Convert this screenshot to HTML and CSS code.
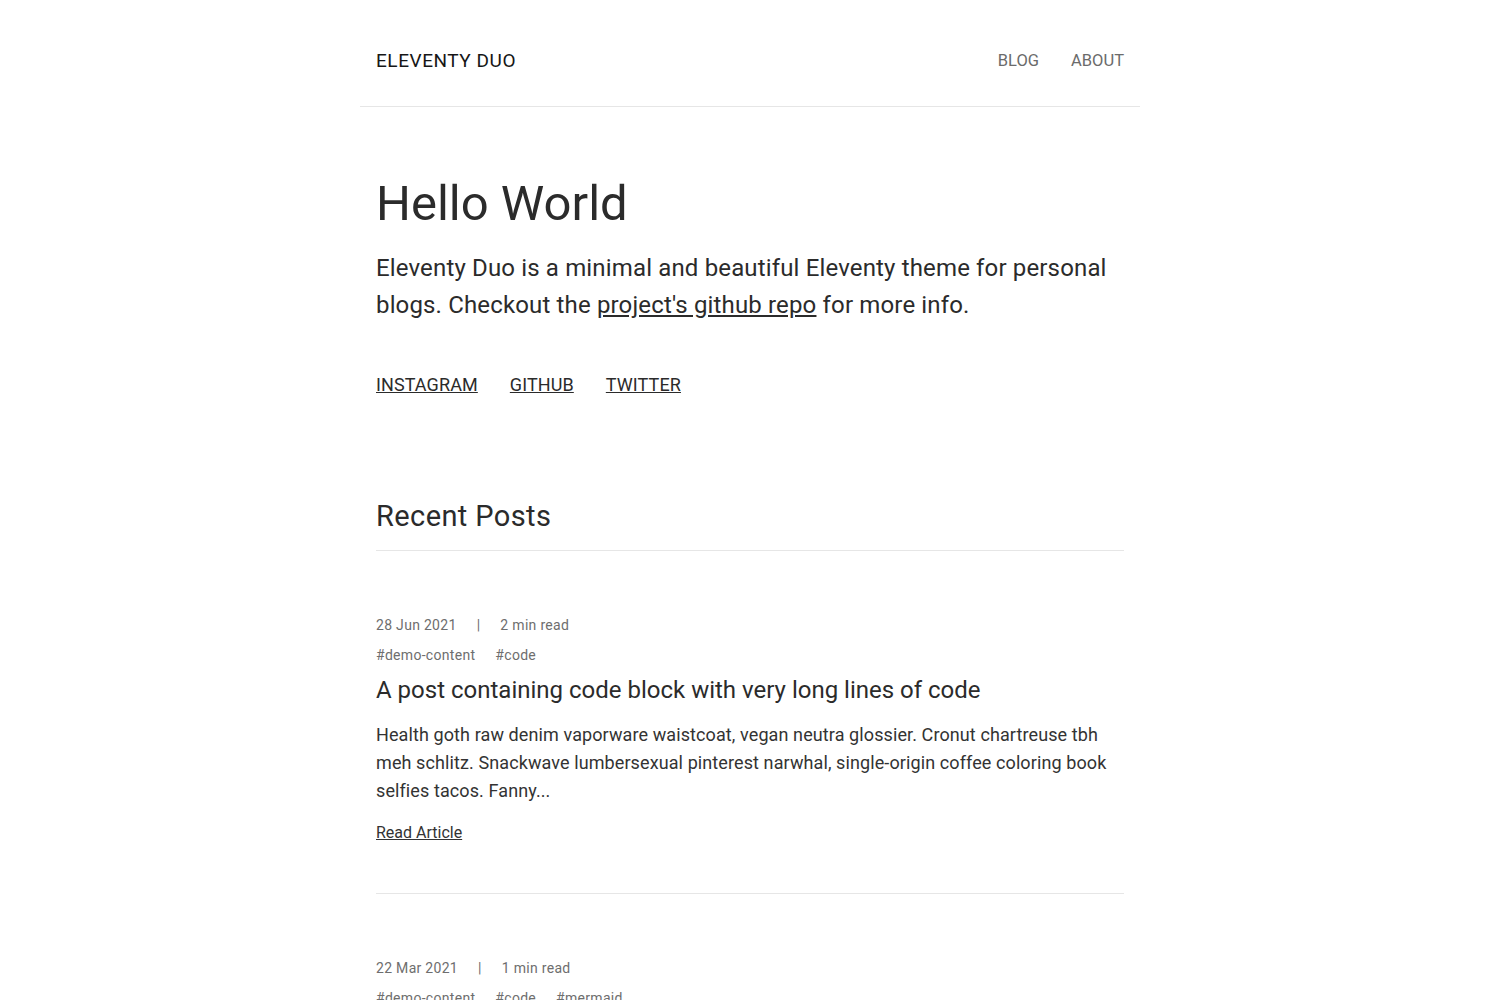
FILE: index.html
```html
<!DOCTYPE html>
<html lang="en">
<head>
<meta charset="utf-8">
<title>Eleventy Duo</title>
<link rel="stylesheet" href="styles.css">
</head>
<body>
<div class="page">
  <header class="site-header">
    <a class="brand" href="#">ELEVENTY DUO</a>
    <nav class="nav">
      <a href="#">BLOG</a>
      <a href="#">ABOUT</a>
    </nav>
  </header>
  <main class="content">
    <section class="hero">
      <h1 class="hero-title">Hello World</h1>
      <p class="hero-text">Eleventy Duo is a minimal and beautiful Eleventy theme for personal blogs. Checkout the <a href="#">project's github repo</a> for more info.</p>
      <ul class="social">
        <li><a href="#">INSTAGRAM</a></li>
        <li><a href="#">GITHUB</a></li>
        <li><a href="#">TWITTER</a></li>
      </ul>
    </section>
    <section class="recent">
      <h2 class="recent-title">Recent Posts</h2>
      <article class="post">
        <div class="meta"><span>28 Jun 2021</span><span>|</span><span>2 min read</span></div>
        <div class="tags"><a href="#">#demo-content</a><a href="#">#code</a></div>
        <h3 class="post-title">A post containing code block with very long lines of code</h3>
        <p class="excerpt">Health goth raw denim vaporware waistcoat, vegan neutra glossier. Cronut chartreuse tbh meh schlitz. Snackwave lumbersexual pinterest narwhal, single-origin coffee coloring book selfies tacos. Fanny...</p>
        <a class="read-more" href="#">Read Article</a>
      </article>
      <article class="post">
        <div class="meta"><span>22 Mar 2021</span><span>|</span><span>1 min read</span></div>
        <div class="tags"><a href="#">#demo-content</a><a href="#">#code</a><a href="#">#mermaid</a></div>
        <h3 class="post-title">A post with a mermaid diagram</h3>
        <p class="excerpt">Health goth raw denim vaporware waistcoat, vegan neutra glossier.</p>
        <a class="read-more" href="#">Read Article</a>
      </article>
    </section>
  </main>
</div>
</body>
</html>
```
FILE: styles.css
```css
html, body {
  margin: 0;
  padding: 0;
  background: #fff;
}
body {
  font-family: Roboto, "Noto Sans", sans-serif;
  color: #2b2b2b;
}
a { color: inherit; }
.page {
  width: 780px;
  margin: 0 auto;
}
.site-header {
  display: flex;
  justify-content: space-between;
  align-items: center;
  padding: 48px 16px 32px;
  border-bottom: 1px solid #e6e6e6;
}
.brand {
  font-size: 19px;
  line-height: 26px;
  text-decoration: none;
  color: #161616;
  letter-spacing: 0.55px;
}
.nav {
  display: flex;
  gap: 32px;
}
.nav a {
  font-size: 16.5px;
  line-height: 26px;
  text-decoration: none;
  color: #6b6b6b;
}
.content {
  padding: 0 16px;
}
.hero {
  padding-top: 67px;
}
.hero-title {
  margin: 0;
  font-weight: 400;
  font-size: 49px;
  line-height: 60px;
  color: #2b2b2b;
}
.hero-text {
  margin: 16px 0 0;
  font-size: 24px;
  line-height: 37px;
  letter-spacing: 0.15px;
}
.social {
  list-style: none;
  margin: 47px 0 0;
  padding: 0;
  display: flex;
  gap: 32px;
  font-size: 18px;
  line-height: 27px;
  letter-spacing: 0.1px;
}
.recent {
  padding-top: 98px;
}
.recent-title {
  margin: 0;
  font-weight: 400;
  font-size: 29px;
  line-height: 40px;
  letter-spacing: 0.4px;
  padding-bottom: 14px;
  border-bottom: 1px solid #e6e6e6;
}
.post {
  padding: 64px 0 48px;
  border-bottom: 1px solid #e6e6e6;
}
.meta {
  display: flex;
  gap: 20px;
  font-size: 14px;
  line-height: 20px;
  letter-spacing: 0.3px;
  color: #6e6e6e;
}
.tags {
  display: flex;
  gap: 20px;
  margin-top: 10px;
  font-size: 14px;
  line-height: 20px;
  letter-spacing: 0.3px;
}
.tags a {
  color: #6e6e6e;
  text-decoration: none;
}
.post-title {
  margin: 10px 0 0;
  font-weight: 400;
  font-size: 24px;
  line-height: 30px;
  color: #2b2b2b;
}
.excerpt {
  margin: 16px 0 0;
  font-size: 18px;
  line-height: 28px;
  letter-spacing: 0.1px;
  color: #333;
}
.read-more {
  display: inline-block;
  margin-top: 16px;
  font-size: 16px;
  line-height: 24px;
  color: #333;
}
```
